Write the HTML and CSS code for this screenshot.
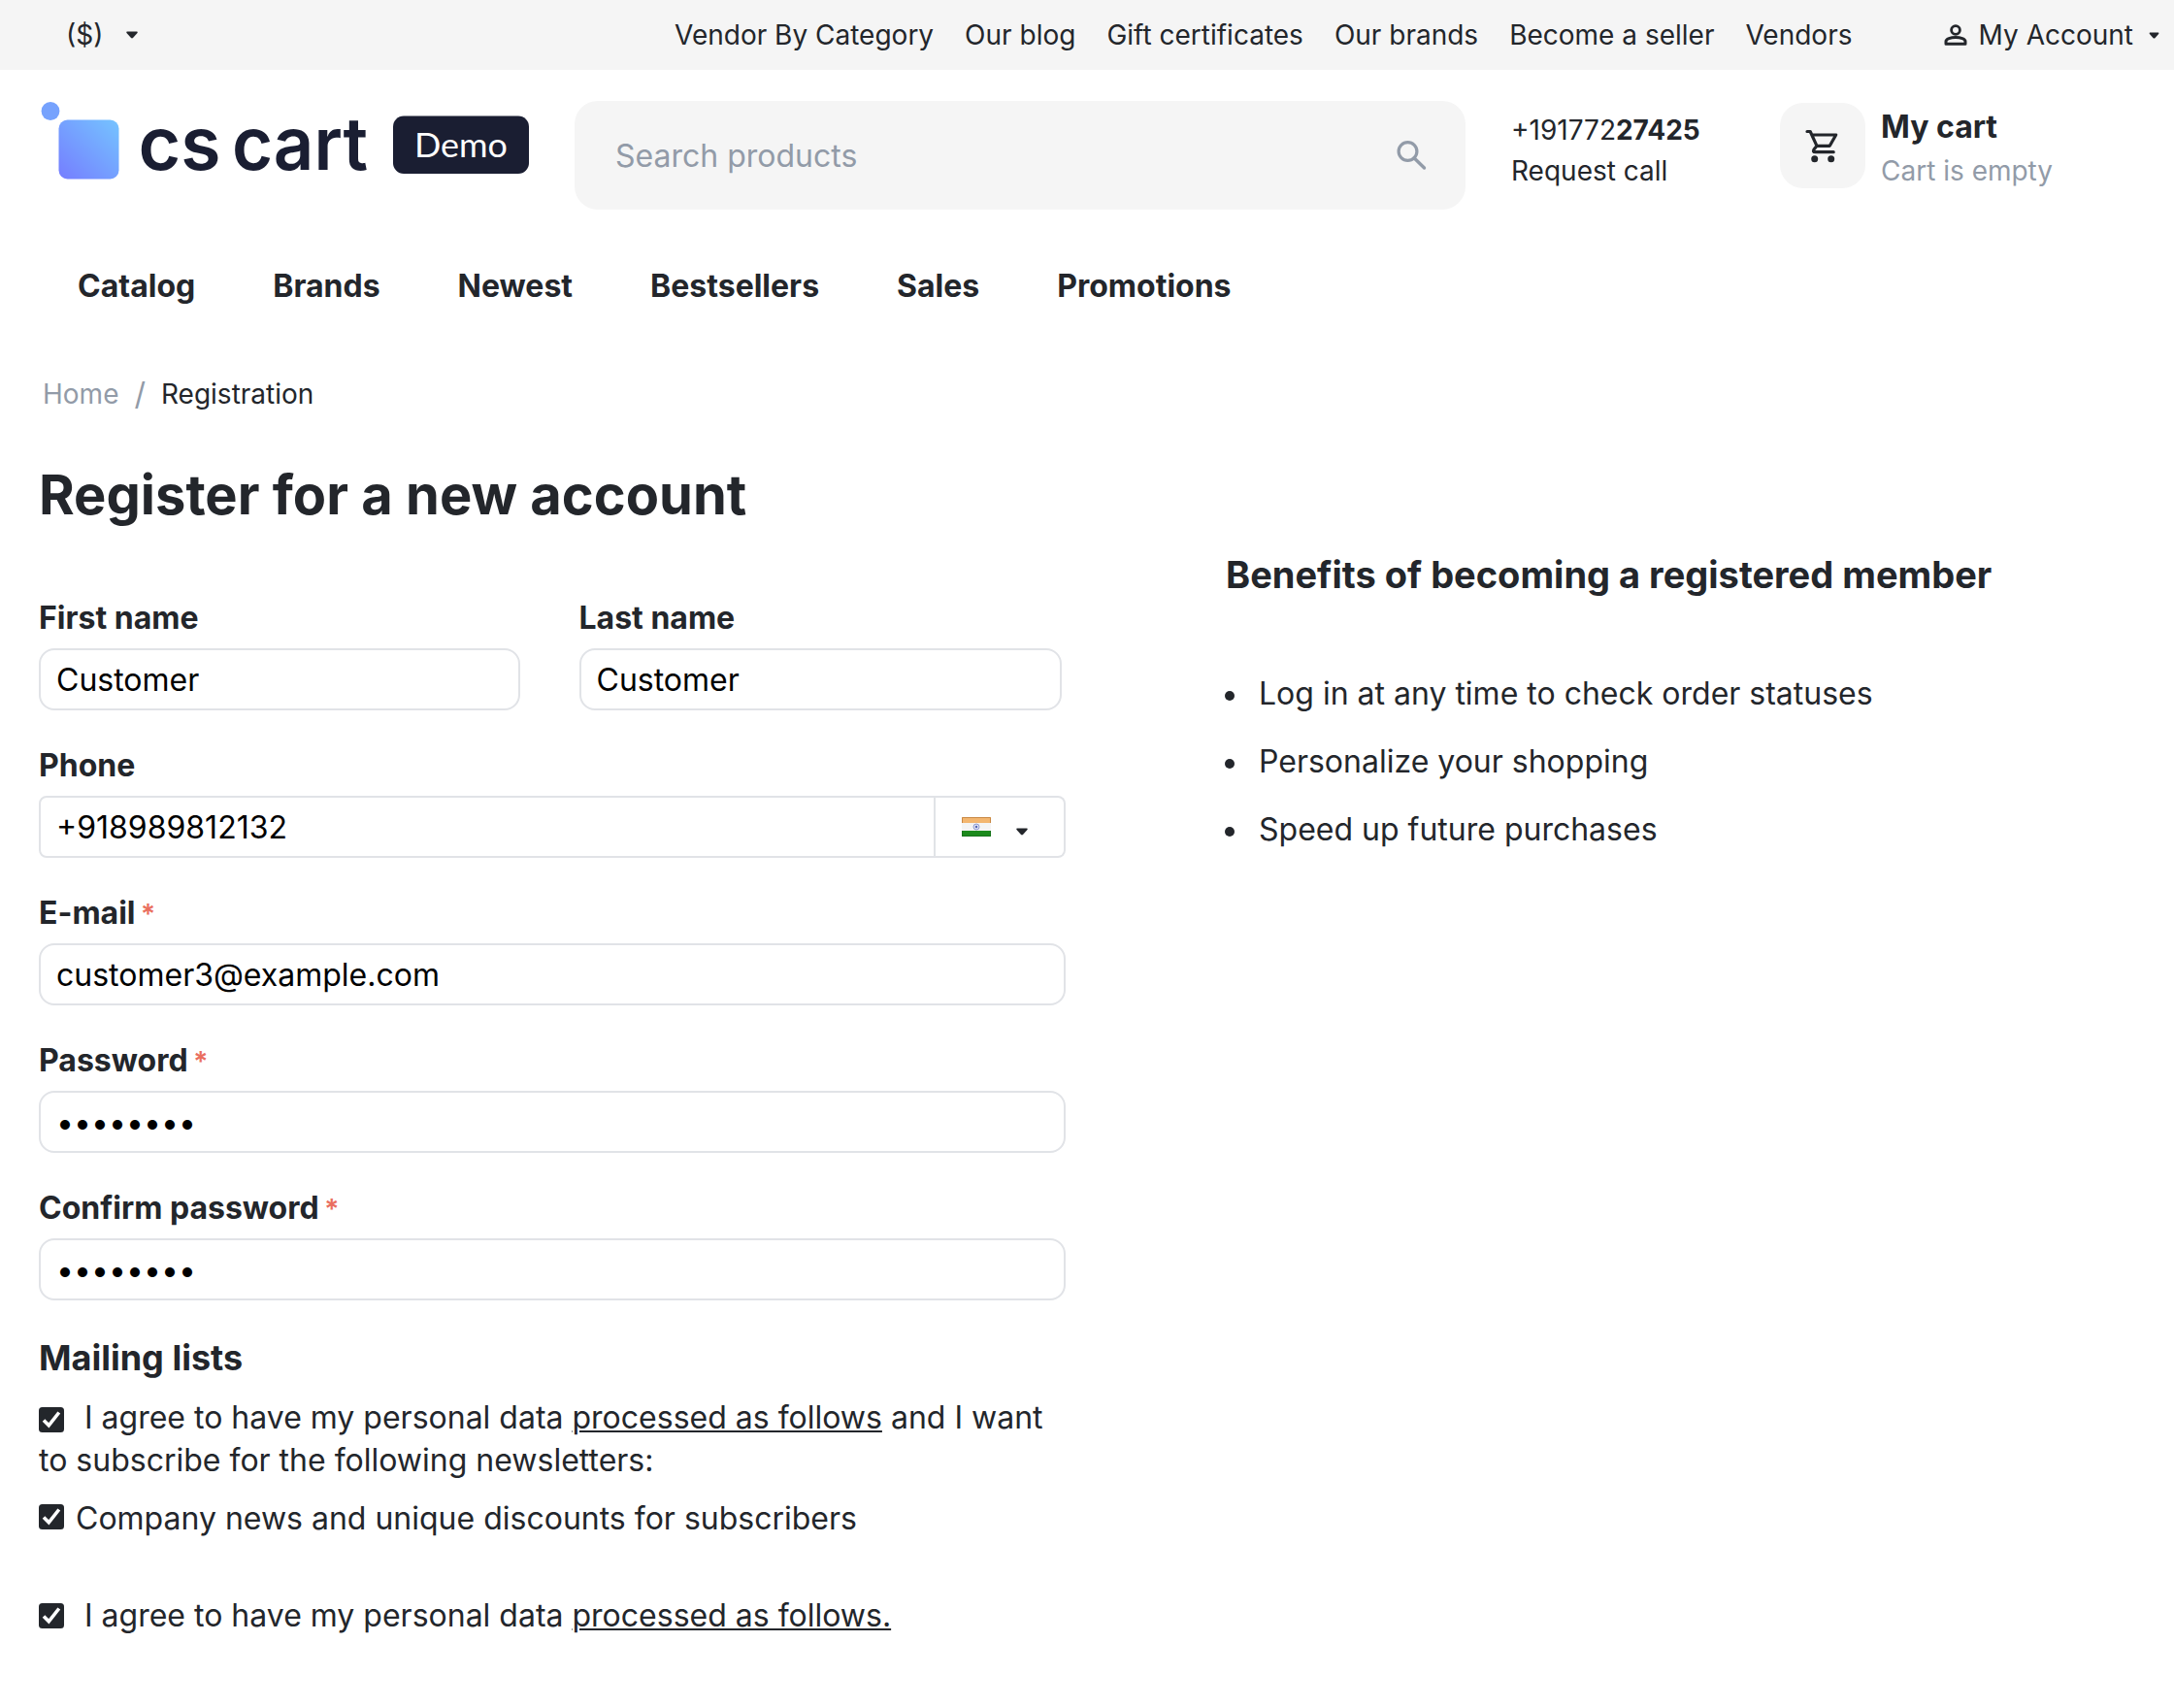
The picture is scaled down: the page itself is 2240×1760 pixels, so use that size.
FILE: index.html
```
<!DOCTYPE html>
<html lang="en">
<head>
    <meta charset="utf-8">
    <title>Registration</title>
    <meta name="viewport" content="width=device-width, initial-scale=1">
    <link rel="stylesheet" href="styles.css">
</head>
<body>

<div class="top-bar">
    <a class="currency">($) <svg class="caret" viewBox="0 0 12 8"><use href="#icon-caret"></use></svg></a>
    <nav class="top-links">
        <a>Vendor By Category</a>
        <a>Our blog</a>
        <a>Gift certificates</a>
        <a>Our brands</a>
        <a>Become a seller</a>
        <a>Vendors</a>
    </nav>
    <a class="account">
        <svg class="account-icon" viewBox="0 0 24 22"><use href="#icon-user"></use></svg>
        <span>My Account</span>
        <svg class="caret caret-small" viewBox="0 0 12 8"><use href="#icon-caret"></use></svg>
    </a>
</div>

<header class="header">
    <a class="logo">
        <svg width="506" height="82" viewBox="0 0 506 82">
            <defs>
                <linearGradient id="logo-fill" x1="0" y1="1" x2="1" y2="0">
                    <stop offset="0" stop-color="#757dff"></stop>
                    <stop offset="1" stop-color="#75c4ff"></stop>
                </linearGradient>
            </defs>
            <circle cx="12" cy="10.5" r="9.4" fill="#76a2fd"></circle>
            <rect x="20.5" y="19.5" width="62" height="61" rx="9" fill="url(#logo-fill)"></rect>
            <text class="logo-name" x="102.5" y="70.500" textLength="85" lengthAdjust="spacingAndGlyphs">cs</text>
            <text class="logo-name" x="199" y="70.500" textLength="140" lengthAdjust="spacingAndGlyphs">cart</text>
            <rect x="365" y="15.5" width="140" height="59.5" rx="11" fill="#1a1e32"></rect>
            <text class="logo-badge" x="387" y="57.5" textLength="96" lengthAdjust="spacingAndGlyphs">Demo</text>
        </svg>
    </a>

    <div class="search">
        <span>Search products</span>
        <svg viewBox="0 0 32 32"><circle cx="12.5" cy="12" r="9.4" fill="none" stroke="#929ba8" stroke-width="3.2"></circle><path d="M19 18.8 29.5 29" fill="none" stroke="#929ba8" stroke-width="3.4" stroke-linecap="round"></path></svg>
    </div>

    <div class="contacts">
        <span>+191772<b>27425</b></span>
        <a>Request call</a>
    </div>

    <div class="cart">
        <span class="cart-icon"><svg viewBox="0 0 36 36"><use href="#icon-cart"></use></svg></span>
        <div>
            <b>My cart</b>
            <span>Cart is empty</span>
        </div>
    </div>
</header>

<nav class="menu">
    <a>Catalog</a>
    <a>Brands</a>
    <a>Newest</a>
    <a>Bestsellers</a>
    <a>Sales</a>
    <a>Promotions</a>
</nav>

<div class="breadcrumbs">
    <a>Home</a>
    <i>/</i>
    <span>Registration</span>
</div>

<main class="content">
    <form class="register">
        <h1>Register for a new account</h1>

        <div class="names">
            <div class="field">
                <label for="firstname">First name</label>
                <input id="firstname" type="text" value="Customer">
            </div>
            <div class="field">
                <label for="lastname">Last name</label>
                <input id="lastname" type="text" value="Customer">
            </div>
        </div>

        <div class="field">
            <label for="phone">Phone</label>
            <div class="phone">
                <input id="phone" type="text" value="+918989812132">
                <span class="country">
                    <svg class="flag" viewBox="0 0 30 24">
                        <rect y="2" width="30" height="20" fill="#f4f4f4"></rect>
                        <rect y="2" width="30" height="6" fill="#f3b66f"></rect>
                        <rect y="16" width="30" height="6" fill="#1c8a1c"></rect>
                        <path d="M.5 8V2.5h29V8" fill="none" stroke="#c98843"></path>
                        <path d="M.5 16v5.5h29V16" fill="none" stroke="#17731b"></path>
                        <circle cx="15" cy="12" r="3" fill="#dfe3f3" stroke="#8f9bd0"></circle>
                        <circle cx="15" cy="12" r="1.2" fill="#5363b5"></circle>
                    </svg>
                    <svg class="caret" viewBox="0 0 12 8"><use href="#icon-caret"></use></svg>
                </span>
            </div>
        </div>

        <div class="field">
            <label for="email">E-mail <em>*</em></label>
            <input id="email" type="text" value="customer3@example.com">
        </div>
        <div class="field">
            <label for="password1">Password <em>*</em></label>
            <input id="password1" type="password" value="customer">
        </div>
        <div class="field">
            <label for="password2">Confirm password <em>*</em></label>
            <input id="password2" type="password" value="customer">
        </div>

        <h2>Mailing lists</h2>
        <p class="agree"><svg class="check" viewBox="0 0 26 26"><use href="#icon-check"></use></svg>I agree to have my personal data <a>processed as follows</a> and I want to subscribe for the following newsletters:</p>
        <p class="agree newsletter"><svg class="check" viewBox="0 0 26 26"><use href="#icon-check"></use></svg>Company news and unique discounts for subscribers</p>
        <p class="agree terms"><svg class="check" viewBox="0 0 26 26"><use href="#icon-check"></use></svg>I agree to have my personal data <a>processed as follows.</a></p>
    </form>

    <aside class="benefits">
        <h3>Benefits of becoming a registered member</h3>
        <ul>
            <li>Log in at any time to check order statuses</li>
            <li>Personalize your shopping</li>
            <li>Speed up future purchases</li>
        </ul>
    </aside>
</main>

<svg class="symbols" width="0" height="0">
    <defs>
        <symbol viewBox="0 0 12 8" id="icon-caret"><path d="M1 .5h10q1.2.3.5 1.4L7 7q-1 .8-2 0L.5 1.9Q-.2.8 1 .5z" fill="#23262b"></path></symbol>
        <symbol viewBox="0 0 24 22" id="icon-user"><circle cx="12" cy="6" r="4.4" fill="none" stroke="#23262b" stroke-width="2.8"></circle><path d="M2 20.2v-2.4c0-2.6 5-4.2 10-4.2s10 1.6 10 4.2v2.4z" fill="none" stroke="#23262b" stroke-width="3" stroke-linejoin="round"></path></symbol>
        <symbol viewBox="0 0 36 36" id="icon-cart"><path d="M2 3.5h3.2L12 18.3h13.3L31.7 7H7M12 18.3l-3 3.6q-1.5 2.8 1.2 2.8h19" fill="none" stroke="#23262b" stroke-width="3.2" stroke-linecap="round" stroke-linejoin="round"></path><circle cx="9.7" cy="31.7" r="3.5" fill="#23262b"></circle><circle cx="26.7" cy="31.7" r="3.5" fill="#23262b"></circle></symbol>
        <symbol viewBox="0 0 26 26" id="icon-check"><rect width="26" height="26" rx="3.5" fill="#23262b"></rect><path d="M5 13.5 10.3 18.8 20.8 5.5" fill="none" stroke="#fff" stroke-width="3.6"></path></symbol>
    </defs>
</svg>

</body>
</html>
```

FILE: styles.css
```
* {box-sizing: border-box;}
body {
    margin: 0;
    background: #fff;
    color: #23262b;
    font-family: Inter, sans-serif;
    font-size: 32px;
    line-height: 44px;
}
.symbols {position: absolute;}
.caret {width: 12px;height: 8px;}

/* Top bar */
.top-bar {
    display: flex;
    align-items: center;
    height: 72px;
    padding: 0 15px 0 68px;
    background: #f5f5f5;
    font-size: 28px;
}
.currency {display: flex;align-items: center;gap: 24px;width: 627px;}
.top-links {display: flex;gap: 32px;white-space: nowrap;}
.account {
    display: flex;
    align-items: center;
    margin-left: auto;
    white-space: nowrap;
}
.account-icon {width: 24px;height: 22px;margin-right: 12px;}
.caret-small {width: 11px;height: 7px;margin-left: 16px;}

/* Header */
.header {
    display: flex;
    align-items: flex-start;
    height: 174px;
    padding: 32px 0 0 40px;
}
.logo {width: 552px;height: 84px;}
.logo svg {display: block;overflow: visible;}
.logo-name {font-size: 76px;font-weight: 560;fill: #1a1e32;}
.logo-badge {font-family: Lato, sans-serif;font-size: 34px;fill: #fff;}
.search {
    display: flex;
    align-items: center;
    justify-content: space-between;
    width: 918px;
    height: 112px;
    padding: 1px 40px 0 42px;
    border-radius: 24px;
    background: #f5f5f5;
    color: #929ba8;
}
.search svg {width: 32px;height: 32px;margin-bottom: 2px;}
.contacts {
    display: flex;
    flex-direction: column;
    width: 324px;
    padding: 9px 0 0 47px;
    font-size: 28px;
    line-height: 42px;
}
.cart {display: flex;gap: 16px;padding-top: 2px;}
.cart-icon {
    display: flex;
    align-items: center;
    justify-content: center;
    width: 88px;
    height: 88px;
    border-radius: 24px;
    background: #f5f5f5;
}
.cart-icon svg {width: 36px;height: 36px;}
.cart div {display: flex;flex-direction: column;padding-top: 3px;}
.cart div span {color: #929ba8;font-size: 28px;line-height: 46px;}

/* Menu */
.menu {
    display: flex;
    gap: 80px;
    height: 120px;
    padding: 27px 80px 0;
    font-weight: 700;
}

.breadcrumbs {
    display: flex;
    gap: 16px;
    height: 80px;
    padding: 18px 44px 0;
    font-size: 28px;
}
.breadcrumbs a {color: #929ba8;}
.breadcrumbs i {color: #929ba8;font-size: 32px;font-style: normal;}

/* Registration form */
.content {display: flex;}
.register {width: 1058px;margin-left: 40px;}
h1, h2, h3, p, ul {margin: 0;padding: 0;}
h1 {font-size: 56px;line-height: 72px;padding-top: 28px;height: 168px;white-space: nowrap;}
.field {height: 152px;}
.field label {
    display: block;
    height: 54px;
    line-height: 46px;
    font-weight: 700;
}
.field em {
    margin-left: -2px;
    color: #ea6f5f;
    font-size: 28px;
    font-style: normal;
    font-weight: 600;
}
.field input {
    display: block;
    width: 100%;
    height: 64px;
    padding: 0 16px;
    border: 2px solid #e1e3e7;
    border-radius: 16px;
    background: #fff;
    color: #000;
    font: inherit;
    outline: none;
}
.names {display: flex;gap: 60.5px;}
.names .field {width: 496px;}
.names .field + .field {width: 497px;}
.phone {display: flex;}
.field .phone input {
    width: 924px;
    border-radius: 8px 0 0 8px;
}
.country {
    display: flex;
    align-items: center;
    gap: 26px;
    width: 134px;
    height: 64px;
    padding-left: 27px;
    border: 2px solid #e1e3e7;
    border-left: 0;
    border-radius: 0 8px 8px 0;
}
.flag {width: 30px;height: 24px;}
.country .caret {margin-top: 9px;}

/* Mailing lists */
h2 {font-size: 36px;line-height: 44px;height: 65px;padding-top: 3px;}
.agree a {text-decoration: underline;text-decoration-thickness: 2px;text-underline-offset: 2px;}
.check {width: 26px;height: 26px;margin-right: 21px;vertical-align: -4px;}
.newsletter {margin: 16px 0 56px;}
.newsletter .check {margin-right: 12px;vertical-align: 0;}
.terms .check {vertical-align: -2px;}

/* Benefits */
.benefits {margin-left: 165px;padding-top: 124px;}
h3 {font-size: 38px;line-height: 44px;height: 110px;}
.benefits ul {list-style: none;}
.benefits li {
    display: flex;
    align-items: center;
    gap: 25px;
    height: 70px;
}
.benefits li::before {
    content: "";
    width: 10px;
    height: 10px;
    margin: 4px 0 0 -1px;
    border-radius: 50%;
    background: #23262b;
}
```
